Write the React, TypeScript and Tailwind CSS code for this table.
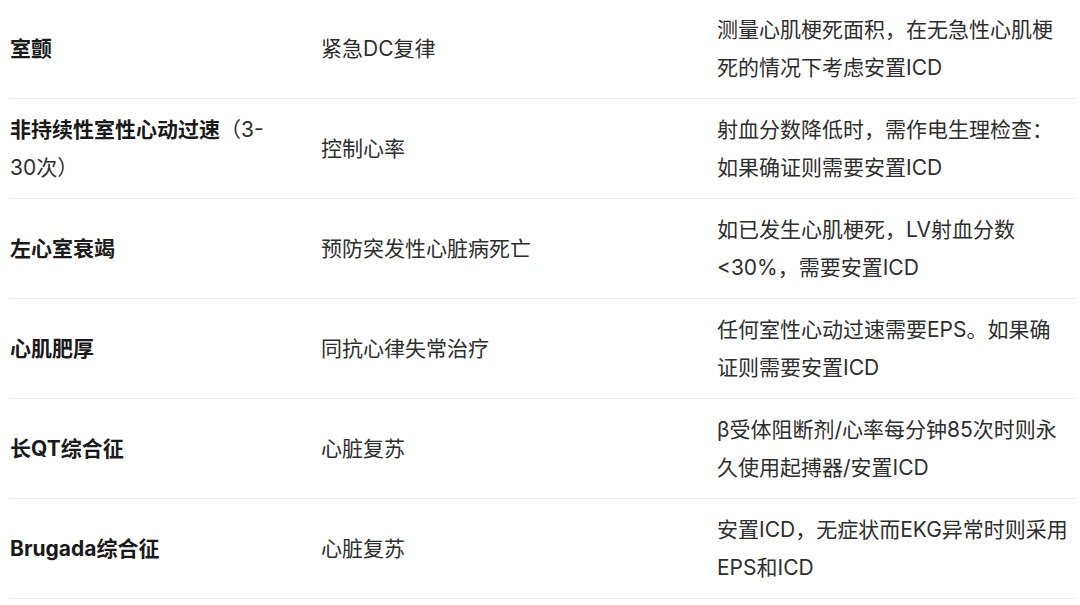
import React from "react";

type Row = {
  name: React.ReactNode;
  action: string;
  note: React.ReactNode;
};

const rows: Row[] = [
  {
    name: <strong className="font-bold text-[#1a1a1a]">室颤</strong>,
    action: "紧急DC复律",
    note: (
      <>
        测量心肌梗死面积，在无急性心肌梗
        <br />
        死的情况下考虑安置ICD
      </>
    ),
  },
  {
    name: (
      <>
        <strong className="font-bold text-[#1a1a1a]">非持续性室性心动过速</strong>（3-
        <br />
        30次）
      </>
    ),
    action: "控制心率",
    note: (
      <>
        射血分数降低时，需作电生理检查：
        <br />
        如果确证则需要安置ICD
      </>
    ),
  },
  {
    name: <strong className="font-bold text-[#1a1a1a]">左心室衰竭</strong>,
    action: "预防突发性心脏病死亡",
    note: (
      <>
        如已发生心肌梗死，LV射血分数
        <br />
        &lt;30%，需要安置ICD
      </>
    ),
  },
  {
    name: <strong className="font-bold text-[#1a1a1a]">心肌肥厚</strong>,
    action: "同抗心律失常治疗",
    note: (
      <>
        任何室性心动过速需要EPS。如果确
        <br />
        证则需要安置ICD
      </>
    ),
  },
  {
    name: <strong className="font-bold text-[#1a1a1a]">长QT综合征</strong>,
    action: "心脏复苏",
    note: (
      <>
        β受体阻断剂/心率每分钟85次时则永
        <br />
        久使用起搏器/安置ICD
      </>
    ),
  },
  {
    name: <strong className="font-bold text-[#1a1a1a]">Brugada综合征</strong>,
    action: "心脏复苏",
    note: (
      <>
        安置ICD，无症状而EKG异常时则采用
        <br />
        EPS和ICD
      </>
    ),
  },
];

export default function App() {
  return (
    <div
      className="w-[1080px] h-[605px] overflow-hidden bg-white text-[#2e2e2e] text-[21px] leading-[37.5px]"
      style={{ fontFamily: 'Inter, "Noto Sans CJK SC", sans-serif' }}
    >
      <div className="ml-[10px] w-[1065px] -mt-px">
        {rows.map((row, i) => (
          <div
            key={i}
            className="grid grid-cols-[311px_396px_358px] h-[100px] items-center border-b border-[#ebebeb]"
          >
            <div className="whitespace-nowrap">{row.name}</div>
            <div className="whitespace-nowrap">{row.action}</div>
            <div className="whitespace-nowrap">{row.note}</div>
          </div>
        ))}
      </div>
    </div>
  );
}
